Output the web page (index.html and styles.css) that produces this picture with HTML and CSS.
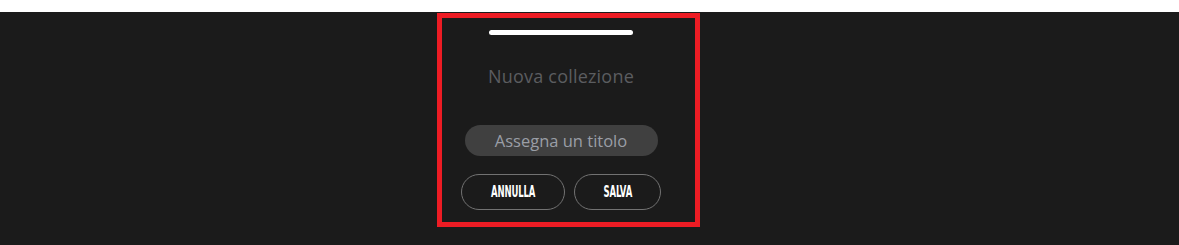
FILE: index.html
```html
<!DOCTYPE html>
<html lang="it">
<head>
<meta charset="utf-8">
<title>Nuova collezione</title>
<link rel="stylesheet" href="styles.css">
</head>
<body>
<div class="topbar"></div>
<main class="stage">
  <section class="sheet">
    <div class="handle"></div>
    <h2 class="title">Nuova collezione</h2>
    <input class="field" type="text" placeholder="Assegna un titolo">
    <div class="actions">
      <button class="btn btn-cancel" type="button"><span class="btn-label">ANNULLA</span></button>
      <button class="btn btn-save" type="button"><span class="btn-label">SALVA</span></button>
    </div>
  </section>
</main>
</body>
</html>
```
FILE: styles.css
```css
* { box-sizing: border-box; }
html, body { margin: 0; padding: 0; }
body {
  background: #1b1b1b;
  width: 1179px;
  height: 245px;
  overflow: hidden;
  font-family: "Open Sans", "DejaVu Sans", sans-serif;
}
.topbar {
  height: 12px;
  background: #ffffff;
}
.stage {
  display: flex;
  padding-top: 1px;
  padding-left: 437px;
}
.sheet {
  width: 263px;
  height: 214px;
  border: 5px solid #ed1c24;
  display: flex;
  flex-direction: column;
  align-items: center;
  padding: 12px 15px 0 0;
}
.handle {
  width: 144px;
  height: 5px;
  border-radius: 3px;
  background: #ffffff;
}
.title {
  margin: 29px 0 0;
  font-weight: 400;
  font-size: 18px;
  line-height: 24px;
  color: #5b5d60;
  letter-spacing: 0.2px;
}
.field {
  margin-top: 37px;
  width: 193px;
  height: 31px;
  border: none;
  border-radius: 16px;
  background: #404040;
  font-family: inherit;
  font-size: 16.5px;
  text-align: center;
  color: #ddd;
  outline: none;
}
.field::placeholder { color: #9a9ea6; }
.actions {
  display: flex;
  gap: 9px;
  margin-top: 18px;
}
.btn {
  height: 36px;
  border: 1px solid #727272;
  border-radius: 18px;
  background: transparent;
  color: #ffffff;
  font-family: "DejaVu Sans Condensed", "DejaVu Sans", sans-serif;
  font-weight: 700;
  font-size: 15px;
  padding: 0;
  display: flex;
  align-items: center;
  justify-content: center;
}
.btn-label {
  display: inline-block;
  transform: scaleX(0.63);
  letter-spacing: -0.2px;
}
.btn-cancel { width: 104px; }
.btn-save { width: 87px; }
```
